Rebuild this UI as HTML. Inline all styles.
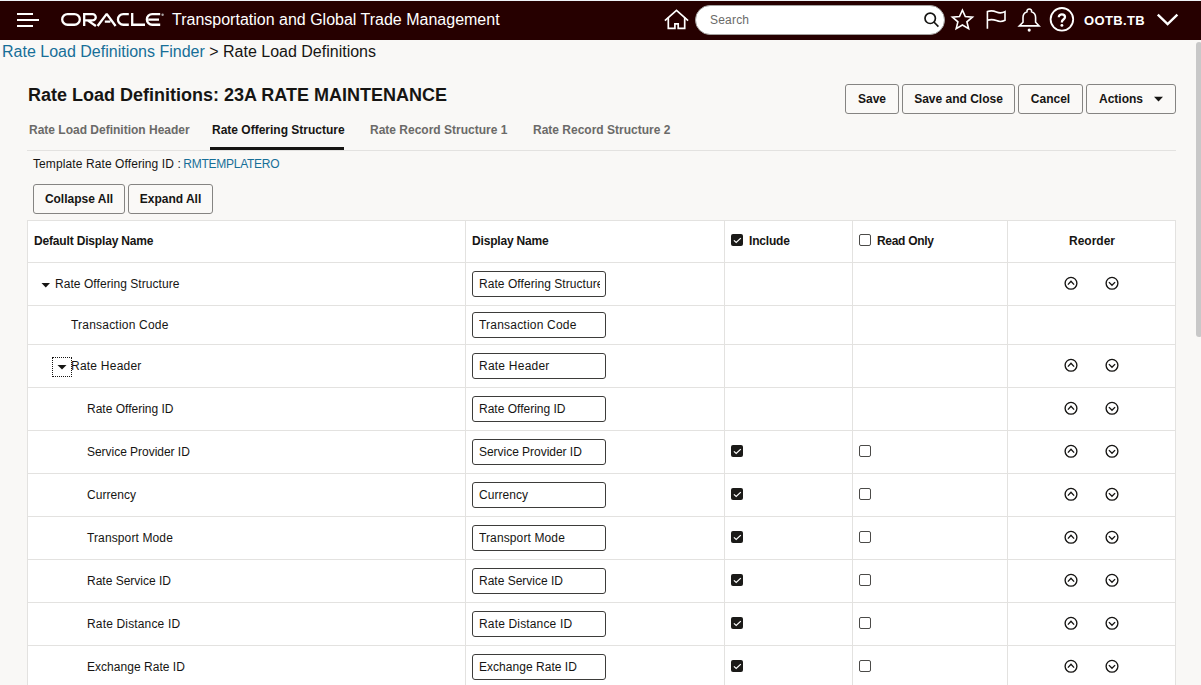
<!DOCTYPE html>
<html><head><meta charset="utf-8">
<style>
*{box-sizing:border-box;margin:0;padding:0}
html,body{width:1201px;height:685px;overflow:hidden;background:#f9f8f6;font-family:"Liberation Sans",sans-serif;color:#161513;position:relative}
.abs{position:absolute;white-space:nowrap}
#topline{position:absolute;left:0;top:0;width:1201px;height:1px;background:#eef3f7}
#hdr{position:absolute;left:0;top:1px;width:1201px;height:39px;background:#260000}
.hb{position:absolute;left:17px;height:2px;background:#fff}
.btn{position:absolute;top:84px;height:30px;border:1px solid #858482;border-radius:3px;background:#faf9f7;font-weight:bold;font-size:12px;line-height:28px;text-align:center;color:#161513}
.tab{position:absolute;top:123px;font-size:12px;font-weight:bold;color:#6b6a68;line-height:14px}
#tbl{position:absolute;left:27px;top:220px;width:1149px;height:470px;background:#fff;border:1px solid #e3e2e0}
.hl{position:absolute;left:28px;width:1147px;height:1px;background:#e3e2e0}
.vl{position:absolute;top:221px;width:1px;height:470px;background:#e3e2e0}
.th{position:absolute;font-size:12px;font-weight:bold;line-height:14px;top:234px;color:#161513}
.td{position:absolute;font-size:12px;line-height:14px;color:#161513;white-space:nowrap}
.inp{position:absolute;left:472px;width:134px;height:26px;border:1px solid #3d3c3a;border-radius:3px;background:#fff;font-size:12px;line-height:24px;padding-left:5px;overflow:hidden;white-space:nowrap;color:#161513}
.cb{position:absolute;width:12px;height:12px;border-radius:2px}
.cb.on{background:#1b1a18;left:731px}
.cb.off{border:1px solid #4b4a48;background:#fff;left:859px}
.it{position:absolute;left:6px;width:121px;top:0;overflow:hidden}
</style></head><body>
<div id="topline"></div>
<div id="hdr">
  <div class="hb" style="top:12px;width:16px"></div>
  <div class="hb" style="top:18px;width:22px"></div>
  <div class="hb" style="top:24px;width:16px"></div>
</div>
<!-- ORACLE logo -->
<svg class="abs" style="left:0;top:0" width="1201" height="40" viewBox="0 0 1201 40">
  <g fill="none" stroke="#fff" stroke-width="2.3">
    <rect x="62.2" y="14.05" width="17.6" height="10.7" rx="5.35"/>
    <path d="M84.2 26V14.05H92.6A3.15 3.15 0 0 1 92.6 20.35H85.3M87.6 20.35L95.9 26"/>
    <path d="M97.6 26L106.7 13.9L115.6 26M104.8 21.6H110.4" stroke-linejoin="bevel"/>
    <path d="M128.8 14.05H123.3A5.35 5.35 0 0 0 123.3 24.75H128.8"/>
    <path d="M132.2 13V24.75H145"/>
    <path d="M160.2 14.05H152.2A5.35 5.35 0 0 0 152.2 24.75H160.2M148.2 19.6H159"/>
  </g>
  <circle cx="162.6" cy="14.7" r="1.2" fill="#a9a2a2"/>
</svg>
<div class="abs" style="left:172px;top:11px;font-size:16px;line-height:18px;color:#fff">Transportation and Global Trade Management</div>

<!-- header right -->
<svg class="abs" style="left:0;top:0" width="1201" height="40" viewBox="0 0 1201 40">
  <g fill="none" stroke="#fff" stroke-width="1.7" stroke-linejoin="miter">
    <path d="M664.9 20.6L676.5 10.3L688.1 20.6"/>
    <path d="M668.3 17.4V28.3H674.9V23.8H678.2V28.3H684.7V17.4"/>
  </g>
  <rect x="695.5" y="5.5" width="249" height="29" rx="14.5" fill="#fff" stroke="#a3a2a0" stroke-width="1"/>
  <g fill="none" stroke="#161513" stroke-width="1.7">
    <circle cx="930.2" cy="18.3" r="5.2"/>
    <path d="M933.9 22L938.4 26.6"/>
  </g>
  <g fill="none" stroke="#fff" stroke-width="1.6" stroke-linejoin="miter">
    <path d="M962.4 10.2L965.3 16.6L972.4 17.1L966.9 21.8L968.6 28.6L962.4 25L956.2 28.6L957.9 21.8L952.4 17.1L959.5 16.6Z"/>
    <path d="M987.4 28.8V11.6C990.8 10.4 993.6 10.8 996.4 12C999.2 13.2 1002 13.2 1005 11.6V20.2C1002 21.8 999.2 21.8 996.4 20.6C993.6 19.4 990.8 19.2 987.4 20.2"/>
    <path d="M1019.3 25.9H1039.1L1035.6 22.2V17.4C1035.6 14.4 1033.8 12.6 1031.6 11.8A2.35 2.35 0 1 0 1027 11.8C1024.8 12.6 1023 14.4 1023 17.4V22.2Z"/>
    <circle cx="1061.9" cy="19.3" r="11.3" stroke-width="1.8"/>
    <path d="M1058.8 17.3C1058.8 15.2 1060.2 14.3 1061.9 14.3C1063.7 14.3 1065 15.4 1065 17C1065 19.4 1061.9 19.6 1061.9 21.9V22.5" stroke-width="2.3"/>
    <path d="M1157.8 14.6L1167.6 24L1177.4 14.6" stroke-width="2.4"/>
  </g>
  <circle cx="1029.2" cy="30.1" r="1.55" fill="#fff"/>
  <circle cx="1061.9" cy="25.4" r="1.45" fill="#fff"/>
</svg>
<div class="abs" style="left:710px;top:13px;font-size:12px;line-height:14px;letter-spacing:0.2px;color:#6b6a68">Search</div>
<div class="abs" style="left:1084px;top:12.5px;font-size:13px;letter-spacing:0.35px;line-height:16px;font-weight:bold;color:#fff">OOTB.TB</div>

<!-- breadcrumb -->
<div class="abs" style="left:2px;top:43px;font-size:16px;line-height:18px"><span style="color:#176f98">Rate Load Definitions Finder</span> &gt; Rate Load Definitions</div>

<!-- title -->
<div class="abs" style="left:28px;top:85px;font-size:18px;line-height:20px;font-weight:bold">Rate Load Definitions: 23A RATE MAINTENANCE</div>

<div class="btn" style="left:845px;width:54px">Save</div>
<div class="btn" style="left:902px;width:113px">Save and Close</div>
<div class="btn" style="left:1018px;width:65px">Cancel</div>
<div class="btn" style="left:1086px;width:90px;text-align:left;padding-left:12px">Actions</div>
<svg class="abs" style="left:1150px;top:94px" width="16" height="10"><path d="M4 2.8H13L8.5 7.6Z" fill="#161513"/></svg>

<!-- tabs -->
<div class="tab" style="left:29px">Rate Load Definition Header</div>
<div class="tab" style="left:212px;color:#161513">Rate Offering Structure</div>
<div class="tab" style="left:370px">Rate Record Structure 1</div>
<div class="tab" style="left:533px">Rate Record Structure 2</div>
<div class="abs" style="left:27px;top:150px;width:1149px;height:1px;background:#e3e2e0"></div>
<div class="abs" style="left:210px;top:147px;width:134px;height:3px;background:#161513"></div>

<div class="abs" style="left:33px;top:157px;font-size:12px;line-height:14px"><span style="letter-spacing:0.1px">Template Rate Offering ID : </span><span style="color:#176f98;letter-spacing:-0.25px;margin-left:-1.1px">RMTEMPLATERO</span></div>
<div class="btn" style="left:33px;top:184px;width:92px">Collapse All</div>
<div class="btn" style="left:128px;top:184px;width:85px">Expand All</div>

<!-- table -->
<div id="tbl"></div>
<!--ROWS-->
<div class="th" style="left:34px;letter-spacing:-0.17px">Default Display Name</div>
<div class="th" style="left:472px;letter-spacing:-0.18px">Display Name</div>
<div class="cb on" style="top:234px"><svg width="12" height="12" style="position:absolute;left:0;top:0"><path d="M2.9 6.4L5.2 8.5L9.8 4.1" fill="none" stroke="#fff" stroke-width="1.25"/></svg></div>
<div class="th" style="left:749px;letter-spacing:-0.18px">Include</div>
<div class="cb off" style="top:234px"></div>
<div class="th" style="left:877px;letter-spacing:-0.3px">Read Only</div>
<div class="th" style="left:1069px">Reorder</div>
<div class="hl" style="top:262px"></div>
<div class="td" style="left:55px;top:277.0px;letter-spacing:0.055px">Rate Offering Structure</div>
<div class="inp" style="top:271px"><span class="it" style="letter-spacing:0.055px">Rate Offering Structure</span></div>
<svg class="abs" style="left:36px;top:262px" width="20" height="43"><path d="M5.5 21H14L9.75 25.5Z" fill="#161513"/></svg>
<div class="hl" style="top:305px"></div>
<div class="td" style="left:71px;top:318.0px;letter-spacing:0.21px">Transaction Code</div>
<div class="inp" style="top:312px"><span class="it" style="letter-spacing:0.21px">Transaction Code</span></div>
<div class="hl" style="top:344px"></div>
<div class="td" style="left:71px;top:359.0px;letter-spacing:0.23px">Rate Header</div>
<div class="inp" style="top:353px"><span class="it" style="letter-spacing:0.23px">Rate Header</span></div>
<div class="abs" style="left:52px;top:357px;width:20px;height:20px;border:1px dotted #161513"></div>
<svg class="abs" style="left:52px;top:344px" width="20" height="43"><path d="M5.5 21H14.5L10 25.5Z" fill="#161513"/></svg>
<div class="hl" style="top:387px"></div>
<div class="td" style="left:87px;top:402.0px;letter-spacing:0px">Rate Offering ID</div>
<div class="inp" style="top:396px"><span class="it" style="letter-spacing:0px">Rate Offering ID</span></div>
<div class="hl" style="top:430px"></div>
<div class="td" style="left:87px;top:445.0px;letter-spacing:-0.03px">Service Provider ID</div>
<div class="inp" style="top:439px"><span class="it" style="letter-spacing:-0.03px">Service Provider ID</span></div>
<div class="cb on" style="top:445px"><svg width="12" height="12" style="position:absolute;left:0;top:0"><path d="M2.9 6.4L5.2 8.5L9.8 4.1" fill="none" stroke="#fff" stroke-width="1.25"/></svg></div>
<div class="cb off" style="top:445px"></div>
<div class="hl" style="top:473px"></div>
<div class="td" style="left:87px;top:488.0px;letter-spacing:0.06px">Currency</div>
<div class="inp" style="top:482px"><span class="it" style="letter-spacing:0.06px">Currency</span></div>
<div class="cb on" style="top:488px"><svg width="12" height="12" style="position:absolute;left:0;top:0"><path d="M2.9 6.4L5.2 8.5L9.8 4.1" fill="none" stroke="#fff" stroke-width="1.25"/></svg></div>
<div class="cb off" style="top:488px"></div>
<div class="hl" style="top:516px"></div>
<div class="td" style="left:87px;top:531.0px;letter-spacing:0.12px">Transport Mode</div>
<div class="inp" style="top:525px"><span class="it" style="letter-spacing:0.12px">Transport Mode</span></div>
<div class="cb on" style="top:531px"><svg width="12" height="12" style="position:absolute;left:0;top:0"><path d="M2.9 6.4L5.2 8.5L9.8 4.1" fill="none" stroke="#fff" stroke-width="1.25"/></svg></div>
<div class="cb off" style="top:531px"></div>
<div class="hl" style="top:559px"></div>
<div class="td" style="left:87px;top:574.0px;letter-spacing:0px">Rate Service ID</div>
<div class="inp" style="top:568px"><span class="it" style="letter-spacing:0px">Rate Service ID</span></div>
<div class="cb on" style="top:574px"><svg width="12" height="12" style="position:absolute;left:0;top:0"><path d="M2.9 6.4L5.2 8.5L9.8 4.1" fill="none" stroke="#fff" stroke-width="1.25"/></svg></div>
<div class="cb off" style="top:574px"></div>
<div class="hl" style="top:602px"></div>
<div class="td" style="left:87px;top:617.0px;letter-spacing:0.16px">Rate Distance ID</div>
<div class="inp" style="top:611px"><span class="it" style="letter-spacing:0.16px">Rate Distance ID</span></div>
<div class="cb on" style="top:617px"><svg width="12" height="12" style="position:absolute;left:0;top:0"><path d="M2.9 6.4L5.2 8.5L9.8 4.1" fill="none" stroke="#fff" stroke-width="1.25"/></svg></div>
<div class="cb off" style="top:617px"></div>
<div class="hl" style="top:645px"></div>
<div class="td" style="left:87px;top:660.0px;letter-spacing:0.03px">Exchange Rate ID</div>
<div class="inp" style="top:654px"><span class="it" style="letter-spacing:0.03px">Exchange Rate ID</span></div>
<div class="cb on" style="top:660px"><svg width="12" height="12" style="position:absolute;left:0;top:0"><path d="M2.9 6.4L5.2 8.5L9.8 4.1" fill="none" stroke="#fff" stroke-width="1.25"/></svg></div>
<div class="cb off" style="top:660px"></div>
<div class="hl" style="top:688px"></div>
<div class="vl" style="left:465px"></div>
<div class="vl" style="left:724px"></div>
<div class="vl" style="left:852px"></div>
<div class="vl" style="left:1007px"></div>
<svg class="abs" style="left:0;top:0" width="1201" height="685"><g fill="none" stroke="#161513" stroke-width="1.35"><circle cx="1071" cy="283.3" r="5.9"/><path d="M1067.9 284.6L1071 281.3L1074.1 284.6"/><circle cx="1112" cy="283.3" r="5.9"/><path d="M1108.9 282.1L1112 285.3L1115.1 282.1"/><circle cx="1071" cy="365.3" r="5.9"/><path d="M1067.9 366.6L1071 363.3L1074.1 366.6"/><circle cx="1112" cy="365.3" r="5.9"/><path d="M1108.9 364.1L1112 367.3L1115.1 364.1"/><circle cx="1071" cy="408.3" r="5.9"/><path d="M1067.9 409.6L1071 406.3L1074.1 409.6"/><circle cx="1112" cy="408.3" r="5.9"/><path d="M1108.9 407.1L1112 410.3L1115.1 407.1"/><circle cx="1071" cy="451.3" r="5.9"/><path d="M1067.9 452.6L1071 449.3L1074.1 452.6"/><circle cx="1112" cy="451.3" r="5.9"/><path d="M1108.9 450.1L1112 453.3L1115.1 450.1"/><circle cx="1071" cy="494.3" r="5.9"/><path d="M1067.9 495.6L1071 492.3L1074.1 495.6"/><circle cx="1112" cy="494.3" r="5.9"/><path d="M1108.9 493.1L1112 496.3L1115.1 493.1"/><circle cx="1071" cy="537.3" r="5.9"/><path d="M1067.9 538.5999999999999L1071 535.3L1074.1 538.5999999999999"/><circle cx="1112" cy="537.3" r="5.9"/><path d="M1108.9 536.0999999999999L1112 539.3L1115.1 536.0999999999999"/><circle cx="1071" cy="580.3" r="5.9"/><path d="M1067.9 581.5999999999999L1071 578.3L1074.1 581.5999999999999"/><circle cx="1112" cy="580.3" r="5.9"/><path d="M1108.9 579.0999999999999L1112 582.3L1115.1 579.0999999999999"/><circle cx="1071" cy="623.3" r="5.9"/><path d="M1067.9 624.5999999999999L1071 621.3L1074.1 624.5999999999999"/><circle cx="1112" cy="623.3" r="5.9"/><path d="M1108.9 622.0999999999999L1112 625.3L1115.1 622.0999999999999"/><circle cx="1071" cy="666.3" r="5.9"/><path d="M1067.9 667.5999999999999L1071 664.3L1074.1 667.5999999999999"/><circle cx="1112" cy="666.3" r="5.9"/><path d="M1108.9 665.0999999999999L1112 668.3L1115.1 665.0999999999999"/></g></svg>
<div class="abs" style="left:1196px;top:42px;width:6px;height:295px;border-radius:3px;background:#c8c8c8"></div>
<!--/ROWS-->
</body></html>
